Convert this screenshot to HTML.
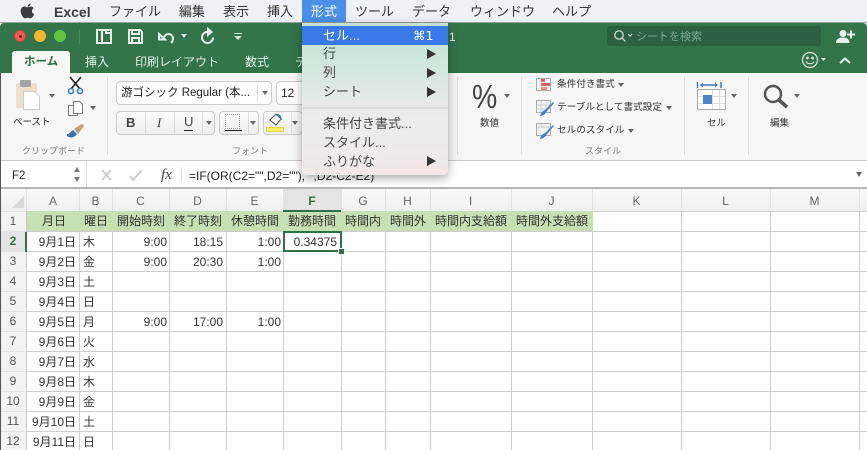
<!DOCTYPE html>
<html><head><meta charset="utf-8">
<style>
html,body{margin:0;padding:0;width:867px;height:450px;overflow:hidden;background:#fff}
body{position:relative;font-family:"Liberation Sans","Noto Sans CJK JP",sans-serif;color:#222}
.a{position:absolute;white-space:nowrap}
.m{top:4px;font-size:13px;line-height:16px;color:#333}
.t{top:54px;font-size:12px;line-height:16px;color:#dfeee4}
.g{font-size:9px;line-height:12px;color:#777}
.c{font-size:12px;line-height:20px;height:20px;color:#333;margin-top:1px}
.r{text-align:right}
.h{top:191px;height:21px;line-height:21px;font-size:12px;color:#666;text-align:center}
.n{left:0;width:26px;text-align:center;font-size:12px;color:#555;line-height:20px;height:20px}
.i{left:323px;font-size:13px;line-height:16px;color:#444;margin-top:1px}
.s{left:557px;font-size:9.65px;line-height:14px;color:#333}
.ar{left:427px;width:0;height:0;border-left:9px solid #333;border-top:5px solid transparent;border-bottom:5px solid transparent}
.dd{width:0;height:0;border-left:3px solid transparent;border-right:3px solid transparent;border-top:4px solid #666}
.btn{background:linear-gradient(#fbfbfb,#eee);border:1px solid #ccc;border-radius:4px;box-sizing:border-box}
</style></head><body>

<!-- menu bar -->
<div class="a" style="left:0;top:0;width:867px;height:23px;background:#eef2f8;border-bottom:1px solid #9aa0a6;box-sizing:border-box"></div>
<svg class="a" style="left:20px;top:3px" width="15" height="16" viewBox="0 0 15 16"><path d="M10.6 0.5c.1 1.6-1.4 3.2-2.9 3.1C7.5 2 9.200.6 10.600.5zM7.600 4.300c.8 0 1.700-.8 3-.8 1.100 0 2.300.6 3 1.600-2.500 1.500-2.100 5 .6 6-.7 1.800-2.200 4.200-3.700 4.200-1 0-1.500-.6-2.700-.6s-1.800.6-2.700.6C3.200 15.300.7 11.300.7 8.100c0-3 1.900-4.600 3.800-4.600 1.200 0 2.300.8 3.100.8z" fill="#3a3d42"/></svg>
<div class="a m" style="left:54px;font-weight:bold;color:#3a3d42;font-size:14px">Excel</div>
<div class="a m" style="left:109px">ファイル</div>
<div class="a m" style="left:179px">編集</div>
<div class="a m" style="left:223px">表示</div>
<div class="a m" style="left:267px">挿入</div>
<div class="a" style="left:302px;top:0;width:44px;height:22px;background:#4a90e8"></div>
<div class="a m" style="left:311px;color:#fff">形式</div>
<div class="a m" style="left:355px">ツール</div>
<div class="a m" style="left:412px">データ</div>
<div class="a m" style="left:470px">ウィンドウ</div>
<div class="a m" style="left:552px">ヘルプ</div>

<!-- title bar -->
<div class="a" style="left:0;top:23px;width:867px;height:50px;background:#33744b;border-radius:4px 4px 0 0"></div>
<div class="a" style="left:14px;top:30px;width:12px;height:12px;border-radius:50%;background:#ee5a52;border:1px solid #c8453e;box-sizing:border-box"></div>
<div class="a" style="left:19px;top:35px;width:3px;height:3px;border-radius:50%;background:#7a1d18"></div>
<div class="a" style="left:34px;top:30px;width:12px;height:12px;border-radius:50%;background:#f5b731"></div>
<div class="a" style="left:54px;top:30px;width:12px;height:12px;border-radius:50%;background:#62c33f"></div>
<svg class="a" style="left:90px;top:26px" width="160" height="20" viewBox="0 0 160 20" fill="none" stroke="#e8f0ea" stroke-width="2">
<path d="M7 4h14v13H7zM12 4v13M16 4v3h5"/>
<path d="M39 4h11l2 2v11H39zM42 4v4h7V4M42 17v-5h7v5"/>
<path d="M74 11c3-5 9-3 9 1.500 0 2-1 3.500-2 4.500M69 8v5.500h6z"/>
<path d="M120 6c-5-1-8 2-8 5.500s3 5.500 5.500 5.500 5.500-2 5.500-5.500"/>
<path d="M118 3v6l3.500-3z" fill="#e8f0ea"/>
</svg>
<div class="a dd" style="left:181px;top:34px;border-top-color:#d8e6dc"></div>
<div class="a" style="left:234px;top:33px;width:8px;height:1px;background:#d8e6dc"></div>
<div class="a dd" style="left:234px;top:36px;border-left-width:4px;border-right-width:4px;border-top-color:#d8e6dc"></div>
<div class="a" style="left:79px;top:30px;width:1px;height:14px;background:#4d8762"></div>
<div class="a" style="left:449px;top:29px;font-size:12px;color:#dfeee4;line-height:16px">1</div>

<!-- search -->
<div class="a" style="left:607px;top:26px;width:214px;height:20px;background:#2b6140;border-radius:3px"></div>
<svg class="a" style="left:612px;top:29px" width="22" height="14" viewBox="0 0 22 14" fill="none" stroke="#dbe8df" stroke-width="1.200"><circle cx="7" cy="6" r="4.200"/><path d="M10 9l3.500 3.500M16 5l2 2 2-2"/></svg>
<div class="a" style="left:636px;top:29px;font-size:11px;line-height:16px;color:#7fa78e">シートを検索</div>
<svg class="a" style="left:836px;top:29px" width="20" height="15" viewBox="0 0 20 15" fill="#e8f0ea"><circle cx="7" cy="4.500" r="3.500"/><path d="M0 14c0-4 3-5.500 7-5.500s6.500 1.500 6.500 5.500zM14 1.500h2v3h3v2h-3v3h-2v-3h-3v-2h3z"/></svg>
<svg class="a" style="left:801px;top:51px" width="44" height="18" viewBox="0 0 44 18" fill="none" stroke="#dbe8df" stroke-width="1.200"><circle cx="9" cy="9" r="7.500"/><circle cx="6.500" cy="7" r=".8" fill="#dbe8df"/><circle cx="11.500" cy="7" r=".8" fill="#dbe8df"/><path d="M5 10.500c1.500 3 6.500 3 8 0"/><path d="M20 7h5l-2.500 3z" fill="#dbe8df" stroke="none"/></svg>
<svg class="a" style="left:838px;top:56px" width="14" height="9" viewBox="0 0 14 9" fill="none" stroke="#e8f0ea" stroke-width="2"><path d="M2 7l5-4.500L12 7"/></svg>

<!-- tabs -->
<div class="a" style="left:12px;top:51px;width:58px;height:22px;background:#f6f6f6;border-radius:3px 3px 0 0"></div>
<div class="a" style="left:24px;top:54px;font-size:11.500px;line-height:16px;color:#2f7048;font-weight:bold">ホーム</div>
<div class="a t" style="left:85px">挿入</div>
<div class="a t" style="left:135px">印刷レイアウト</div>
<div class="a t" style="left:245px">数式</div>
<div class="a t" style="left:295px">デ</div>

<!-- ribbon -->
<div class="a" style="left:1px;top:73px;width:866px;height:87px;background:#f6f6f6"></div>
<div class="a" style="left:0;top:160px;width:867px;height:1px;background:#c9c9c9"></div>
<div class="a" style="left:107px;top:77px;width:1px;height:78px;background:#dedede"></div>
<div class="a" style="left:457px;top:77px;width:1px;height:78px;background:#dedede"></div>
<div class="a" style="left:521px;top:77px;width:1px;height:78px;background:#dedede"></div>
<div class="a" style="left:684px;top:77px;width:1px;height:78px;background:#dedede"></div>
<div class="a" style="left:748px;top:77px;width:1px;height:78px;background:#dedede"></div>

<!-- clipboard -->
<svg class="a" style="left:14px;top:78px" width="30" height="34" viewBox="0 0 30 34"><rect x="2" y="5" width="21" height="25" rx="2" fill="#f0dfc8"/><rect x="6" y="2" width="11" height="7" rx="1" fill="#a5a5a5"/><path d="M9.500 13.500h11l5 5v13h-16z" fill="#fff" stroke="#ccc"/></svg>
<div class="a dd" style="left:49px;top:94px"></div>
<div class="a" style="left:13px;top:116px;font-size:9.500px;line-height:14px;color:#222">ペースト</div>
<svg class="a" style="left:66px;top:76px" width="20" height="19" viewBox="0 0 20 19" fill="none" stroke="#222" stroke-width="1.600"><path d="M4 1l10 12M15 1L5 13"/><circle cx="5" cy="15" r="2.500" stroke="#3a7cc0"/><circle cx="14" cy="15" r="2.500" stroke="#3a7cc0"/></svg>
<svg class="a" style="left:67px;top:101px" width="17" height="16" viewBox="0 0 17 16" fill="#fff" stroke="#777"><path d="M1.500 4.500h7l2 2v8h-9z"/><path d="M6.500.5h6l3 3v9h-9z"/></svg>
<div class="a dd" style="left:90px;top:106px"></div>
<svg class="a" style="left:66px;top:123px" width="19" height="16" viewBox="0 0 19 16"><path d="M1 11c3 0 4-3 6-4l4 4c-2 3-6 5-10 2z" fill="#3f6fae"/><path d="M8 6l8-5 2 2-6 8z" fill="#b9a27a"/></svg>
<div class="a g" style="left:22px;top:145px">クリップボード</div>

<!-- font -->
<div class="a btn" style="left:116px;top:81px;width:156px;height:24px;background:#fff"></div>
<div class="a" style="left:257px;top:84px;width:1px;height:18px;background:#ddd"></div>
<div class="a" style="left:121px;top:85px;font-size:11.500px;line-height:16px;color:#222">游ゴシック Regular (本...</div>
<div class="a dd" style="left:262px;top:91px"></div>
<div class="a btn" style="left:276px;top:81px;width:30px;height:24px;background:#fff"></div>
<div class="a" style="left:281px;top:85px;font-size:12px;line-height:16px;color:#222">12</div>
<div class="a btn" style="left:116px;top:111px;width:99px;height:24px"></div>
<div class="a" style="left:145px;top:112px;width:1px;height:22px;background:#ddd"></div>
<div class="a" style="left:174px;top:112px;width:1px;height:22px;background:#ddd"></div>
<div class="a" style="left:202px;top:112px;width:1px;height:22px;background:#ddd"></div>
<div class="a" style="left:126px;top:115px;font-size:13px;font-weight:bold;line-height:16px;color:#444">B</div>
<div class="a" style="left:157px;top:115px;font-size:13px;font-style:italic;line-height:16px;color:#444;font-family:'Liberation Serif',serif">I</div>
<div class="a" style="left:184px;top:114px;font-size:13px;line-height:16px;color:#444">U</div>
<div class="a" style="left:184px;top:130px;width:9px;height:1px;background:#222"></div>
<div class="a dd" style="left:206px;top:121px"></div>
<div class="a btn" style="left:219px;top:111px;width:40px;height:24px"></div>
<div class="a" style="left:225px;top:114px;width:15px;height:15px;border:1px dotted #999;box-sizing:border-box"></div>
<div class="a" style="left:225px;top:130px;width:17px;height:1px;background:#222"></div>
<div class="a" style="left:248px;top:112px;width:1px;height:22px;background:#ddd"></div>
<div class="a dd" style="left:250px;top:121px"></div>
<div class="a btn" style="left:263px;top:111px;width:40px;height:24px"></div>
<div class="a" style="left:266px;top:127px;width:18px;height:5px;background:#f6ef6a;border:1px solid #e0d850;box-sizing:border-box"></div>
<svg class="a" style="left:268px;top:113px" width="16" height="14" viewBox="0 0 16 14"><path d="M2 7l6-6 5 5-5 6z" fill="#fff" stroke="#555"/><path d="M8 2c3-1 5 1 5 5" fill="none" stroke="#3a7cc0" stroke-width="1.500"/></svg>
<div class="a" style="left:291px;top:112px;width:1px;height:22px;background:#ddd"></div>
<div class="a dd" style="left:292px;top:121px"></div>
<div class="a g" style="left:232px;top:145px">フォント</div>

<!-- number -->
<div class="a" style="left:472px;top:77px;font-size:33px;line-height:40px;color:#444;transform:scaleX(.86);transform-origin:0 0">%</div>
<div class="a dd" style="left:504px;top:94px"></div>
<div class="a" style="left:480px;top:117px;font-size:9.500px;line-height:14px;color:#333">数値</div>

<!-- styles -->
<svg class="a" style="left:536px;top:78px" width="16" height="14" viewBox="0 0 16 14"><rect x=".5" y=".5" width="14" height="12" fill="#fff" stroke="#aaa"/><rect x="5" y="1" width="4" height="3" fill="#e06060"/><rect x="5" y="5" width="9" height="3" fill="#e06060"/><rect x="5" y="9" width="6" height="3" fill="#e09090"/></svg>
<div class="a s" style="top:78px">条件付き書式</div>
<div class="a dd" style="left:618px;top:83px"></div>
<svg class="a" style="left:536px;top:100px" width="18" height="17" viewBox="0 0 18 17"><rect x=".5" y=".5" width="14" height="12" fill="#f4f4f4" stroke="#aaa"/><path d="M5 1v12M10 1v12M1 5h13M1 9h13" stroke="#ccc" fill="none"/><path d="M4 16c1-4 3-5 5-6l8-8 1 1-7 8c-1 2-4 5-7 5z" fill="#3f7fc8"/></svg>
<div class="a s" style="top:101px">テーブルとして書式設定</div>
<div class="a dd" style="left:666px;top:106px"></div>
<svg class="a" style="left:536px;top:123px" width="18" height="17" viewBox="0 0 18 17"><rect x=".5" y=".5" width="14" height="12" fill="#eef3f8" stroke="#aaa"/><path d="M1 4h13M5 1v3" stroke="#ccc" fill="none"/><path d="M4 16c1-4 3-5 5-6l8-8 1 1-7 8c-1 2-4 5-7 5z" fill="#3f7fc8"/></svg>
<div class="a s" style="top:124px">セルのスタイル</div>
<div class="a dd" style="left:628px;top:129px"></div>
<div class="a g" style="left:585px;top:145px">スタイル</div>

<!-- cells -->
<svg class="a" style="left:696px;top:81px" width="32" height="30" viewBox="0 0 32 30"><path d="M1.500 1v6M25 1v6" stroke="#3a7cc0" stroke-width="1.500"/><path d="M5 4h16" stroke="#3a7cc0" stroke-width="1.500"/><path d="M4 4l3-2.500v5zM22 4l-3-2.500v5z" fill="#3a7cc0"/><rect x="1.500" y="8.500" width="28" height="20" fill="#fff" stroke="#aaa"/><path d="M16.500 9v19M23.500 9v19M2 15.500h27M2 22.500h27" stroke="#ddd"/><rect x="7" y="14" width="9" height="9" fill="#4c86c8"/></svg>
<div class="a dd" style="left:731px;top:94px"></div>
<div class="a" style="left:707px;top:117px;font-size:9.500px;line-height:14px;color:#333">セル</div>

<!-- edit -->
<svg class="a" style="left:762px;top:82px" width="30" height="30" viewBox="0 0 30 30" fill="none" stroke="#555"><circle cx="11" cy="12" r="8" stroke-width="2.500"/><path d="M17 18l8 7" stroke-width="3.500"/></svg>
<div class="a dd" style="left:794px;top:94px"></div>
<div class="a" style="left:770px;top:117px;font-size:9.500px;line-height:14px;color:#333">編集</div>

<!-- formula bar -->
<div class="a" style="left:0;top:161px;width:867px;height:26px;background:#fff"></div>
<div class="a" style="left:0;top:187px;width:867px;height:2px;background:#b5b5b5"></div>
<div class="a" style="left:12px;top:168px;font-size:11.500px;line-height:16px;color:#222">F2</div>
<div class="a" style="left:74px;top:167px;width:0;height:0;border-left:3.500px solid transparent;border-right:3.500px solid transparent;border-bottom:5px solid #777"></div>
<div class="a" style="left:74px;top:177px;width:0;height:0;border-left:3.500px solid transparent;border-right:3.500px solid transparent;border-top:5px solid #777"></div>
<div class="a" style="left:86px;top:161px;width:1px;height:26px;background:#ddd"></div>
<svg class="a" style="left:99px;top:168px" width="50" height="14" viewBox="0 0 50 14" fill="none" stroke="#c9c9c9" stroke-width="1.800"><path d="M3 2l9 10M12 2L3 12M31 8l3 4 9-10"/></svg>
<div class="a" style="left:161px;top:166px;font-family:'Liberation Serif',serif;font-style:italic;font-size:15px;line-height:18px;color:#444">fx</div>
<div class="a" style="left:181px;top:167px;width:1px;height:15px;background:#ddd"></div>
<div class="a" style="left:189px;top:168px;font-size:12px;line-height:16px;color:#222">=IF(OR(C2="",D2=""),"",D2-C2-E2)</div>
<div class="a dd" style="left:856px;top:172px;border-left-width:3.500px;border-right-width:3.500px;border-top-width:5px"></div>

<!-- sheet -->
<div class="a" style="left:0;top:189px;width:867px;height:22px;background:linear-gradient(#f9f9f9,#f0f0f0)"></div>
<div class="a" style="left:0;top:211px;width:27px;height:239px;background:#f3f3f3"></div>
<div class="a" style="left:12px;top:196px;width:0;height:0;border-left:12px solid transparent;border-bottom:12px solid #d9d9d9"></div>
<div class="a" style="left:283px;top:189px;width:58px;height:22px;background:#e4e4e4"></div>
<div class="a" style="left:0;top:231px;width:27px;height:20px;background:#e4e4e4"></div>
<svg class="a" style="left:0;top:189px" width="867" height="261" shape-rendering="crispEdges" stroke="#cdcdcd">
<path d="M26.500 22V261M79.500 22V261M112.500 22V261M169.500 22V261M226.500 22V261M283.500 22V261M341.500 22V261M385.500 22V261M430.500 22V261M511.500 22V261M592.500 22V261M681.500 22V261M770.500 22V261M859.500 22V261"/>
<path d="M26 22.500H867M26 42.500H867M26 62.500H867M26 82.500H867M26 102.500H867M26 122.500H867M26 142.500H867M26 162.500H867M26 182.500H867M26 202.500H867M26 222.500H867M26 242.500H867"/>
<path stroke="#e2e2e2" d="M26.500 0V22M79.500 0V22M112.500 0V22M169.500 0V22M226.500 0V22M283.500 0V22M341.500 0V22M385.500 0V22M430.500 0V22M511.500 0V22M592.500 0V22M681.500 0V22M770.500 0V22M859.500 0V22"/>
<path stroke="#e2e2e2" d="M0 22.500H26M0 42.500H26M0 62.500H26M0 82.500H26M0 102.500H26M0 122.500H26M0 142.500H26M0 162.500H26M0 182.500H26M0 202.500H26M0 222.500H26M0 242.500H26"/>
</svg>
<div class="a" style="left:27px;top:211px;width:566px;height:20px;background:#c6e0b4"></div>
<div class="a" style="left:25px;top:232px;width:2px;height:20px;background:#2f7048"></div>
<div class="a" style="left:283px;top:210px;width:58px;height:2px;background:#2f7048"></div>
<div class="a" style="left:0;top:73px;width:1px;height:377px;background:#555"></div>

<div class="a h" style="left:27px;width:52px">A</div>
<div class="a h" style="left:79px;width:33px">B</div>
<div class="a h" style="left:112px;width:57px">C</div>
<div class="a h" style="left:169px;width:57px">D</div>
<div class="a h" style="left:226px;width:57px">E</div>
<div class="a h" style="left:283px;width:58px;font-weight:bold;color:#2f7048">F</div>
<div class="a h" style="left:341px;width:44px">G</div>
<div class="a h" style="left:385px;width:45px">H</div>
<div class="a h" style="left:430px;width:81px">I</div>
<div class="a h" style="left:511px;width:81px">J</div>
<div class="a h" style="left:592px;width:89px">K</div>
<div class="a h" style="left:681px;width:89px">L</div>
<div class="a h" style="left:770px;width:89px">M</div>

<div class="a n" style="top:211px">1</div>
<div class="a n" style="top:231px;font-weight:bold;color:#2f7048">2</div>
<div class="a n" style="top:251px">3</div>
<div class="a n" style="top:271px">4</div>
<div class="a n" style="top:291px">5</div>
<div class="a n" style="top:311px">6</div>
<div class="a n" style="top:331px">7</div>
<div class="a n" style="top:351px">8</div>
<div class="a n" style="top:371px">9</div>
<div class="a n" style="top:391px">10</div>
<div class="a n" style="top:411px">11</div>
<div class="a n" style="top:431px">12</div>

<div class="a c" style="left:42px;top:210px">月日</div>
<div class="a c" style="left:84px;top:210px">曜日</div>
<div class="a c" style="left:117px;top:210px">開始時刻</div>
<div class="a c" style="left:174px;top:210px">終了時刻</div>
<div class="a c" style="left:231px;top:210px">休憩時間</div>
<div class="a c" style="left:288px;top:210px">勤務時間</div>
<div class="a c" style="left:345px;top:210px">時間内</div>
<div class="a c" style="left:390px;top:210px">時間外</div>
<div class="a c" style="left:435px;top:210px">時間内支給額</div>
<div class="a c" style="left:516px;top:210px">時間外支給額</div>

<div class="a c r" style="right:791px;top:231px">9月1日</div><div class="a c" style="left:83px;top:231px">木</div>
<div class="a c r" style="right:791px;top:251px">9月2日</div><div class="a c" style="left:83px;top:251px">金</div>
<div class="a c r" style="right:791px;top:271px">9月3日</div><div class="a c" style="left:83px;top:271px">土</div>
<div class="a c r" style="right:791px;top:291px">9月4日</div><div class="a c" style="left:83px;top:291px">日</div>
<div class="a c r" style="right:791px;top:311px">9月5日</div><div class="a c" style="left:83px;top:311px">月</div>
<div class="a c r" style="right:791px;top:331px">9月6日</div><div class="a c" style="left:83px;top:331px">火</div>
<div class="a c r" style="right:791px;top:351px">9月7日</div><div class="a c" style="left:83px;top:351px">水</div>
<div class="a c r" style="right:791px;top:371px">9月8日</div><div class="a c" style="left:83px;top:371px">木</div>
<div class="a c r" style="right:791px;top:391px">9月9日</div><div class="a c" style="left:83px;top:391px">金</div>
<div class="a c r" style="right:791px;top:411px">9月10日</div><div class="a c" style="left:83px;top:411px">土</div>
<div class="a c r" style="right:791px;top:431px">9月11日</div><div class="a c" style="left:83px;top:431px">日</div>

<div class="a c r" style="right:700px;top:231px">9:00</div><div class="a c r" style="right:644px;top:231px">18:15</div><div class="a c r" style="right:586px;top:231px">1:00</div>
<div class="a c r" style="right:700px;top:251px">9:00</div><div class="a c r" style="right:644px;top:251px">20:30</div><div class="a c r" style="right:586px;top:251px">1:00</div>
<div class="a c r" style="right:700px;top:311px">9:00</div><div class="a c r" style="right:644px;top:311px">17:00</div><div class="a c r" style="right:586px;top:311px">1:00</div>

<div class="a" style="left:283px;top:231px;width:59px;height:21px;border:2px solid #2f7048;box-sizing:border-box"></div>
<div class="a" style="left:338px;top:248px;width:5px;height:5px;background:#2f7048;border:1px solid #fff"></div>
<div class="a c r" style="right:530px;top:231px">0.34375</div>

<!-- dropdown -->
<div class="a" style="left:302px;top:23px;width:146px;height:152px;background:linear-gradient(#c4e0d2 0%,#cfe6da 25%,#ececea 62%,#f2e8e6 100%);border-radius:0 0 5px 5px;box-shadow:0 3px 10px rgba(0,0,0,.35)"></div>
<div class="a" style="left:302px;top:26px;width:146px;height:19px;background:#3a7ae8"></div>
<div class="a i" style="top:27px;color:#fff">セル...</div>
<div class="a" style="left:413px;top:28px;font-size:12.500px;line-height:16px;color:#fff;font-family:'DejaVu Sans',sans-serif">⌘1</div>
<div class="a i" style="top:45px">行</div><div class="a ar" style="top:49px"></div>
<div class="a i" style="top:64px">列</div><div class="a ar" style="top:68px"></div>
<div class="a i" style="top:83px">シート</div><div class="a ar" style="top:87px"></div>
<div class="a" style="left:302px;top:107px;width:146px;height:2px;background:#dcdcdc"></div>
<div class="a i" style="top:115px">条件付き書式...</div>
<div class="a i" style="top:134px">スタイル...</div>
<div class="a i" style="top:153px">ふりがな</div><div class="a ar" style="top:156px"></div>

</body></html>
